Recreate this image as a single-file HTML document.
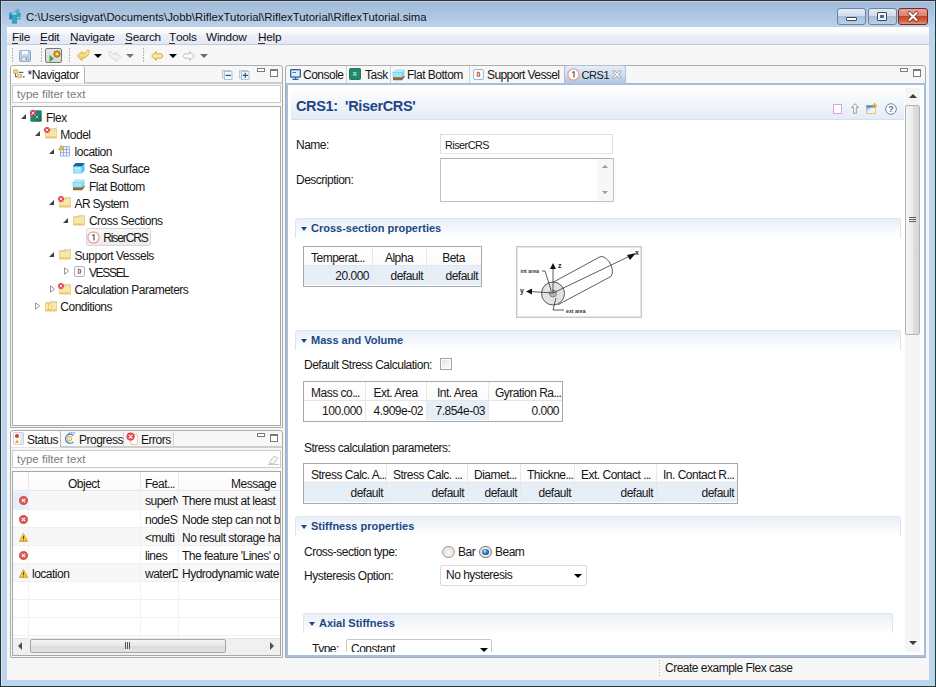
<!DOCTYPE html>
<html><head><meta charset="utf-8">
<style>
*{box-sizing:border-box;margin:0;padding:0}
html,body{width:936px;height:687px;overflow:hidden}
body{position:relative;font-family:"Liberation Sans",sans-serif;font-size:12px;letter-spacing:-0.5px;color:#161616;background:#b9d1ea}
.a{position:absolute}
.t{position:absolute;white-space:nowrap;line-height:13px;height:13px}
#frame{left:0;top:0;width:936px;height:687px;border:1px solid #2f3236;background:linear-gradient(#a2bcd9 0,#a6c0dd 8px,#b2cae5 18px,#bdd4ec 27px,#bcd4ec 60px,#bcd4ec)}
#frame2{left:1px;top:1px;width:934px;height:685px;border:1px solid rgba(255,255,255,0.35);border-bottom-color:#9ee4f7;border-right-color:#9ee4f7}
#title{left:26px;top:11px;font-size:11.4px;letter-spacing:0;color:#111}
.wbtn{top:8px;height:17px;border:1px solid #6f8199;border-radius:3px;background:linear-gradient(#e3ecf7 0,#cfdeef 45%,#a8c0dc 50%,#bad0e8 100%)}
#menubar{left:7px;top:27px;width:922px;height:18px;background:linear-gradient(#ffffff 0,#fcfcfe 30%,#eceff8 50%,#e4e8f5 100%);border-bottom:1px solid #c6cbdb}
.m{top:31px;font-size:11.8px;letter-spacing:-0.25px;color:#111}
.m u{text-decoration:none;position:relative}
.m u:after{content:"";position:absolute;left:0;right:1px;bottom:0px;height:1px;background:#333}
#toolbar{left:7px;top:45px;width:922px;height:21px;background:#f7f7f7}
#main{left:7px;top:66px;width:922px;height:614px;background:#f7f7f7}
.sep{position:absolute;width:1px;top:48px;height:15px;background:repeating-linear-gradient(#b5b5b5 0,#b5b5b5 2px,transparent 2px,transparent 3px)}
.dd{position:absolute;width:0;height:0;border-left:4px solid transparent;border-right:4px solid transparent;border-top:4px solid #000}
.pbox{position:absolute;border:1px solid #ababab;border-radius:3px 3px 0 0;background:#f7f7f7}
.tabsel{position:absolute;background:#fff;border-right:1px solid #b5b5b5}
.minb{position:absolute;width:8px;height:4px;border:1px solid #7a7a7a;background:#fff}
.maxb{position:absolute;width:8px;height:8px;border:1px solid #7a7a7a;border-top-width:2px;background:#fff}
.filter{position:absolute;border:1px solid #cbcbcb;background:#fff}
.gray{color:#7b7b7b;letter-spacing:0}
.tri{position:absolute;width:0;height:0;border-left:5px solid transparent;border-bottom:5px solid #404040}
.trc{position:absolute;width:0;height:0;border-top:4px solid transparent;border-bottom:4px solid transparent;border-left:4px solid #a0a0a0}
.trc:after{content:"";position:absolute;left:-3.5px;top:-2.5px;border-top:2.5px solid transparent;border-bottom:2.5px solid transparent;border-left:2.5px solid #fff}
.tl{position:absolute;white-space:nowrap;line-height:13px}
.vl{position:absolute;width:1px;background:#f0f0f0}
.hl{position:absolute;height:1px;background:#f0f0f0}
.sh{position:absolute;height:20px;border:1px solid #dde6f0;border-bottom:none;border-radius:3px 3px 0 0;background:linear-gradient(#e9eff7,#f6f9fc 60%,#ffffff)}
.shx{position:absolute;font-weight:bold;font-size:11px;letter-spacing:0;color:#1b4884;white-space:nowrap;line-height:13px}
.arr{position:absolute;width:0;height:0;border-left:3.5px solid transparent;border-right:3.5px solid transparent;border-top:4px solid #1b4884}
.tbl{position:absolute;border:1px solid #a7a7a7;background:#fff}
.th{position:absolute;white-space:nowrap;line-height:13px;overflow:hidden}
.cs{position:absolute;width:1px;background:#e5e5e5}
</style></head><body>
<div id="frame" class="a"></div><div id="frame2" class="a"></div>
<!-- title -->
<svg class="a" style="left:8px;top:8px" width="15" height="17" viewBox="0 0 15 17"><g fill="#3a9fc0"><rect x="7.5" y="1" width="4" height="3.6" rx="1"/><rect x="1" y="4.5" width="8" height="7" rx="0.6"/><rect x="3.8" y="11" width="5.2" height="4.8" rx="0.6"/><rect x="8.8" y="4.8" width="4" height="6.6" rx="0.6"/></g><rect x="8.2" y="1.6" width="2.6" height="1.2" fill="#7fd3ea"/><rect x="4" y="5" width="4.5" height="1.6" fill="#8fdaf0"/><rect x="9.5" y="9" width="3" height="1.2" fill="#8fdaf0"/><rect x="2" y="7" width="2" height="4" fill="#2b85a6"/></svg>
<div id="title" class="t">C:\Users\sigvat\Documents\Jobb\RiflexTutorial\RiflexTutorial\RiflexTutorial.sima</div>
<div class="a wbtn" style="left:837px;width:29px"></div>
<div class="a" style="left:846px;top:17px;width:11px;height:4px;background:#fff;border:1px solid #3c4a5c;border-radius:1px"></div>
<div class="a wbtn" style="left:868px;width:29px"></div>
<div class="a" style="left:877px;top:12px;width:10px;height:9px;background:#f4f4f4;border:1px solid #3c4a5c;border-radius:1px"></div>
<div class="a" style="left:880px;top:15px;width:4px;height:3px;background:#4a6a98"></div>
<div class="a wbtn" style="left:898px;width:30px;border-color:#6e2a2a;background:linear-gradient(#eba08f 0,#e0826d 45%,#c8442a 50%,#d7603f 80%,#e9957f 100%)"></div>
<svg class="a" style="left:906px;top:11px" width="14" height="11" viewBox="0 0 14 11"><path d="M3.5 2 L10.5 9 M10.5 2 L3.5 9" stroke="#5b2a22" stroke-width="3.6" stroke-linecap="round"/><path d="M3.5 2 L10.5 9 M10.5 2 L3.5 9" stroke="#fff" stroke-width="2.2" stroke-linecap="round"/></svg>

<!-- menu -->
<div id="menubar" class="a"></div>
<div class="t m" style="left:12px"><u>F</u>ile</div>
<div class="t m" style="left:40px"><u>E</u>dit</div>
<div class="t m" style="left:70px"><u>N</u>avigate</div>
<div class="t m" style="left:125px"><u>S</u>earch</div>
<div class="t m" style="left:169px"><u>T</u>ools</div>
<div class="t m" style="left:206px">Window</div>
<div class="t m" style="left:258px"><u>H</u>elp</div>

<!-- toolbar -->
<div id="toolbar" class="a"></div>
<div class="sep" style="left:12px"></div>
<div class="sep" style="left:41px"></div>
<div class="sep" style="left:69px"></div>
<div class="sep" style="left:143px"></div>
<!-- save -->
<svg class="a" style="left:19px;top:50px" width="12" height="12" viewBox="0 0 12 12"><rect x="0.5" y="0.5" width="11" height="11" rx="1.2" fill="#b9cde8" stroke="#8ea8cc"/><rect x="3" y="0.8" width="6" height="4.4" fill="#f6f8fb"/><path d="M3 4.6 H9" stroke="#d8c890" stroke-width="0.8"/><rect x="3" y="7.2" width="6" height="4" fill="#e4ebf5" stroke="#8aa3c6" stroke-width="0.6"/><rect x="6.5" y="8" width="1.5" height="2.4" fill="#7d98c0"/></svg>
<!-- pressed run button -->
<div class="a" style="left:45px;top:48px;width:17px;height:15px;border:1px solid #777;border-radius:2px;background:linear-gradient(#e4e4e4,#d8d8d8)"></div>
<svg class="a" style="left:49px;top:50px" width="12" height="12" viewBox="0 0 12 12"><path d="M0.5 5 L5 8.5 L0.5 12Z" fill="#3aa83a"/><circle cx="8" cy="4" r="3.2" fill="#d99c2b" stroke="#8a5a10" stroke-width="0.7"/><circle cx="8" cy="4" r="1.2" fill="#ffe28a"/></svg>
<!-- undo -->
<svg class="a" style="left:76px;top:49px" width="14" height="13" viewBox="0 0 14 13"><defs><linearGradient id="ug" x1="0" y1="0" x2="0" y2="1"><stop offset="0" stop-color="#fff0b0"/><stop offset="1" stop-color="#f0c850"/></linearGradient></defs><path d="M1.3 7 L6 2.3 L6 4.6 C8.3 4.6 10.6 3.2 11.6 0.8 L13.2 1.8 C13.2 6.2 10.2 9.2 6 9.3 L6 11.8 Z" fill="url(#ug)" stroke="#d7a32a" stroke-width="0.8" stroke-linejoin="round"/></svg>
<div class="dd" style="left:94px;top:54px"></div>
<svg class="a" style="left:107.5px;top:49.5px" width="14" height="13" viewBox="0 0 14 13"><path d="M12.7 7 L8 2.3 L8 4.6 C5.7 4.6 3.4 3.2 2.4 0.8 L0.8 1.8 C0.8 6.2 3.8 9.2 8 9.3 L8 11.8 Z" fill="#f3f3ee" stroke="#cfcfc6" stroke-width="0.8" stroke-linejoin="round"/></svg>
<div class="dd" style="left:126px;top:54px;border-top-color:#7a7a7a"></div>
<!-- back / forward -->
<svg class="a" style="left:151px;top:51px" width="12" height="10" viewBox="0 0 12 10"><path d="M0.6 5 L5.2 0.6 L5.2 2.9 L9.8 2.9 C11 2.9 11.4 3.8 11.4 5 C11.4 6.2 11 7.1 9.8 7.1 L5.2 7.1 L5.2 9.4 Z" fill="#fde9a6" stroke="#d39b1a" stroke-width="0.9" stroke-linejoin="round"/></svg>
<div class="dd" style="left:169px;top:54px"></div>
<svg class="a" style="left:182.5px;top:51px" width="12" height="10" viewBox="0 0 12 10"><path d="M11.4 5 L6.8 0.6 L6.8 2.9 L2.2 2.9 C1 2.9 0.6 3.8 0.6 5 C0.6 6.2 1 7.1 2.2 7.1 L6.8 7.1 L6.8 9.4 Z" fill="#fdfdfd" stroke="#a9a9a9" stroke-width="0.8" stroke-linejoin="round"/></svg>
<div class="dd" style="left:200px;top:54px;border-top-color:#6e6e6e"></div>

<!-- main -->
<div id="main" class="a"></div>

<!-- NAVIGATOR PANEL -->
<div class="pbox" style="left:10px;top:65px;width:273px;height:363px"></div>
<div class="tabsel" style="left:11px;top:66px;width:74px;height:17px;border-radius:3px 3px 0 0"></div>
<div class="a" style="left:85px;top:82px;width:197px;height:2px;background:#cdcdcd"></div><div class="a" style="left:11px;top:83px;width:74px;height:1px;background:#e2e2e2"></div>
<svg class="a" style="left:13px;top:69px" width="12" height="10" viewBox="0 0 12 10"><rect x="0.3" y="0.8" width="4.6" height="3.6" rx="1" fill="#f6d77a" stroke="#d09a3a" stroke-width="0.7"/><path d="M2.5 4.4 V7.6 H4.2" stroke="#3a7cc0" stroke-width="1.1" fill="none"/><path d="M5.8 3.4 H10.4" stroke="#2f6aad" stroke-width="1.1"/><rect x="4.2" y="5.4" width="4.8" height="3.4" rx="1" fill="#f6d77a" stroke="#d09a3a" stroke-width="0.7"/><rect x="10" y="7" width="1.6" height="1.6" fill="#4f8ccc"/></svg>
<div class="t" style="left:27.5px;top:69px;font-size:12.1px">*Navigator</div>
<svg class="a" style="left:222px;top:70px" width="11" height="10" viewBox="0 0 11 10"><rect x="0.5" y="0.5" width="8" height="7.5" fill="#e2f2fb" stroke="#b4c6da" stroke-width="0.9"/><rect x="2.5" y="1.5" width="7.5" height="8" fill="#f2fafe" stroke="#a9bcd3" stroke-width="0.9"/><path d="M3.6 5.4 H9" stroke="#2a5d8f" stroke-width="1.3"/></svg>
<svg class="a" style="left:239px;top:70px" width="11" height="10" viewBox="0 0 11 10"><rect x="0.5" y="0.5" width="8" height="7.5" fill="#e2f2fb" stroke="#b4c6da" stroke-width="0.9"/><rect x="2.5" y="1.5" width="7.5" height="8" fill="#f2fafe" stroke="#a9bcd3" stroke-width="0.9"/><path d="M3.6 5.4 H9 M6.3 2.7 V8.1" stroke="#2a5d8f" stroke-width="1.3"/></svg>
<div class="minb" style="left:257px;top:68px"></div>
<div class="maxb" style="left:270px;top:69px"></div>
<div class="filter" style="left:12px;top:85px;width:269px;height:18px"></div>
<div class="t gray" style="left:17px;top:88px;font-size:11.5px">type filter text</div>
<div class="a" style="left:12px;top:106px;width:269px;height:320px;border:1px solid #a3a8b0;background:#fff"></div>

<!-- TREE -->
<div class="a" style="left:86px;top:228px;width:65px;height:18px;background:linear-gradient(#f7f7f7,#ececec);border:1px solid #d9d9d9;border-radius:2px"></div>
<div class="tri" style="left:20.5px;top:114.1px"></div>
<svg class="a" style="left:29.5px;top:110.1px" width="12" height="12" viewBox="0 0 12 12"><defs><linearGradient id="fg" x1="0" y1="0" x2="1" y2="1"><stop offset="0" stop-color="#2a9c7e"/><stop offset="1" stop-color="#156a52"/></linearGradient></defs><rect x="0.3" y="0.3" width="11.4" height="11.4" rx="1.2" fill="url(#fg)"/><path d="M5.5 5.5 L8.5 8.5 M8.5 5.5 L5.5 8.5" stroke="#bfe6d8" stroke-width="0.7"/><circle cx="3" cy="3" r="3" fill="#e5434d"/><path d="M1.9 1.9 L4.1 4.1 M4.1 1.9 L1.9 4.1" stroke="#fff" stroke-width="0.9" stroke-linecap="round"/></svg>
<div class="tl" style="left:46.0px;top:111.6px">Flex</div>
<div class="tri" style="left:34.8px;top:131.3px"></div>
<svg class="a" style="left:43.8px;top:127.3px" width="13" height="12" viewBox="0 0 13 12"><g transform="translate(1,0.5)"><path d="M0.6 2.2 H4.6 L5.4 1.2 H11.4 V10.6 H0.6Z" fill="#f3d27a" stroke="#d9b45a" stroke-width="0.6"/><rect x="6.5" y="1.8" width="4.3" height="1.4" fill="#d6ecf5"/><rect x="0.8" y="3.4" width="10.4" height="7" fill="#f9e7a4"/><rect x="0.8" y="9" width="10.4" height="1.4" fill="#e8c466"/></g><circle cx="3" cy="3" r="3" fill="#e5434d"/><path d="M1.9 1.9 L4.1 4.1 M4.1 1.9 L1.9 4.1" stroke="#fff" stroke-width="0.9" stroke-linecap="round"/></svg>
<div class="tl" style="left:60.3px;top:128.8px">Model</div>
<div class="tri" style="left:49.1px;top:148.6px"></div>
<svg class="a" style="left:58.1px;top:144.6px" width="12" height="12" viewBox="0 0 12 12"><rect x="2.5" y="1.5" width="9" height="9.5" fill="#f4f8fd" stroke="#7ba3d6" stroke-width="0.8"/><path d="M5.5 1.5 V11 M8.5 1.5 V11 M2.5 4.5 H11.5 M2.5 7.7 H11.5" stroke="#7ba3d6" stroke-width="0.8"/><path d="M3 0.3 L5.7 5 H0.3Z" fill="#f3c21c" stroke="#c08a10" stroke-width="0.4"/></svg>
<div class="tl" style="left:74.6px;top:146.1px">location</div>
<svg class="a" style="left:72.4px;top:161.8px" width="13" height="12" viewBox="0 0 13 12"><path d="M1 4 L3.5 1 H12.5 L10 4Z" fill="#1f5fae"/><path d="M10 4 L12.5 1 V8.5 L10 11.5Z" fill="#4cc6ee"/><rect x="1" y="4" width="9" height="7.5" fill="#7fdcf6"/><rect x="2.5" y="5.5" width="6" height="2.2" fill="#c4f2fc"/><rect x="2.5" y="8.6" width="6" height="1.6" fill="#aeeafa"/><path d="M1 4 H10 L12.5 1" stroke="#1d4f9a" stroke-width="0.5" fill="none"/></svg>
<div class="tl" style="left:88.9px;top:163.3px">Sea Surface</div>
<svg class="a" style="left:72.4px;top:179.1px" width="13" height="12" viewBox="0 0 13 12"><path d="M1 3.5 L3.5 1 H12.5 L10 3.5Z" fill="#b8f0fc" stroke="#5fc8ee" stroke-width="0.5"/><path d="M10 3.5 L12.5 1 V7.5 L10 10Z" fill="#7fdcf6"/><rect x="1" y="3.5" width="9" height="5" fill="#9ee6f8" stroke="#5fc8ee" stroke-width="0.5"/><path d="M1 8.3 H10 L12.5 6.5 V8.2 L10 11.2 H1Z" fill="#8c6c38"/><path d="M1 8.3 H10 L12.5 6.5" stroke="#c7a565" stroke-width="0.6" fill="none"/></svg>
<div class="tl" style="left:88.9px;top:180.6px">Flat Bottom</div>
<div class="tri" style="left:49.1px;top:200.3px"></div>
<svg class="a" style="left:58.1px;top:196.3px" width="13" height="12" viewBox="0 0 13 12"><g transform="translate(1,0.5)"><path d="M0.6 2.2 H4.6 L5.4 1.2 H11.4 V10.6 H0.6Z" fill="#f3d27a" stroke="#d9b45a" stroke-width="0.6"/><rect x="6.5" y="1.8" width="4.3" height="1.4" fill="#d6ecf5"/><rect x="0.8" y="3.4" width="10.4" height="7" fill="#f9e7a4"/><rect x="0.8" y="9" width="10.4" height="1.4" fill="#e8c466"/></g><circle cx="3" cy="3" r="3" fill="#e5434d"/><path d="M1.9 1.9 L4.1 4.1 M4.1 1.9 L1.9 4.1" stroke="#fff" stroke-width="0.9" stroke-linecap="round"/></svg>
<div class="tl" style="left:74.6px;top:197.8px;letter-spacing:-0.7px">AR System</div>
<div class="tri" style="left:63.4px;top:217.6px"></div>
<svg class="a" style="left:72.4px;top:213.6px" width="13" height="12" viewBox="0 0 13 12"><g transform="translate(1,0.5)"><path d="M0.6 2.2 H4.6 L5.4 1.2 H11.4 V10.6 H0.6Z" fill="#f3d27a" stroke="#d9b45a" stroke-width="0.6"/><rect x="6.5" y="1.8" width="4.3" height="1.4" fill="#d6ecf5"/><rect x="0.8" y="3.4" width="10.4" height="7" fill="#f9e7a4"/><rect x="0.8" y="9" width="10.4" height="1.4" fill="#e8c466"/></g></svg>
<div class="tl" style="left:88.9px;top:215.1px">Cross Sections</div>
<svg class="a" style="left:86.7px;top:230.8px" width="13" height="13" viewBox="0 0 13 13"><circle cx="6.5" cy="6.5" r="5.6" fill="#fff" stroke="#f2a8a8" stroke-width="1.5"/><path d="M5.2 4.5 L7 3.5 V9.5" stroke="#333" stroke-width="1" fill="none"/></svg>
<div class="tl" style="left:103.2px;top:232.3px;letter-spacing:-1.1px">RiserCRS</div>
<div class="tri" style="left:49.1px;top:252.1px"></div>
<svg class="a" style="left:58.1px;top:248.1px" width="13" height="12" viewBox="0 0 13 12"><g transform="translate(1,0.5)"><path d="M0.6 2.2 H4.6 L5.4 1.2 H11.4 V10.6 H0.6Z" fill="#f3d27a" stroke="#d9b45a" stroke-width="0.6"/><rect x="6.5" y="1.8" width="4.3" height="1.4" fill="#d6ecf5"/><rect x="0.8" y="3.4" width="10.4" height="7" fill="#f9e7a4"/><rect x="0.8" y="9" width="10.4" height="1.4" fill="#e8c466"/></g></svg>
<div class="tl" style="left:74.6px;top:249.6px">Support Vessels</div>
<svg class="a" style="left:63.9px;top:267.4px" width="6" height="8" viewBox="0 0 6 8"><path d="M0.5 0.8 L4.6 4 L0.5 7.2Z" fill="#fff" stroke="#8a8a8a" stroke-width="0.9"/></svg>
<svg class="a" style="left:73.9px;top:265.9px" width="11" height="11" viewBox="0 0 11 11"><rect x="0.5" y="0.5" width="10" height="10" rx="1.5" fill="#fafcff" stroke="#8fb0d8" stroke-width="0.9"/><path d="M3.8 2.8 H5.8 Q7.3 2.8 7.3 5.3 Q7.3 7.8 5.8 7.8 H3.8Z" fill="#c0683a"/><rect x="4.8" y="4" width="1.2" height="2.6" fill="#f0d8c8"/></svg>
<div class="tl" style="left:88.9px;top:266.9px;letter-spacing:-1.3px">VESSEL</div>
<svg class="a" style="left:49.6px;top:284.6px" width="6" height="8" viewBox="0 0 6 8"><path d="M0.5 0.8 L4.6 4 L0.5 7.2Z" fill="#fff" stroke="#8a8a8a" stroke-width="0.9"/></svg>
<svg class="a" style="left:58.1px;top:282.6px" width="13" height="12" viewBox="0 0 13 12"><g transform="translate(1,0.5)"><path d="M0.6 2.2 H4.6 L5.4 1.2 H11.4 V10.6 H0.6Z" fill="#f3d27a" stroke="#d9b45a" stroke-width="0.6"/><rect x="6.5" y="1.8" width="4.3" height="1.4" fill="#d6ecf5"/><rect x="0.8" y="3.4" width="10.4" height="7" fill="#f9e7a4"/><rect x="0.8" y="9" width="10.4" height="1.4" fill="#e8c466"/></g><circle cx="3" cy="3" r="3" fill="#e5434d"/><path d="M1.9 1.9 L4.1 4.1 M4.1 1.9 L1.9 4.1" stroke="#fff" stroke-width="0.9" stroke-linecap="round"/></svg>
<div class="tl" style="left:74.6px;top:284.1px">Calculation Parameters</div>
<svg class="a" style="left:35.3px;top:301.9px" width="6" height="8" viewBox="0 0 6 8"><path d="M0.5 0.8 L4.6 4 L0.5 7.2Z" fill="#fff" stroke="#8a8a8a" stroke-width="0.9"/></svg>
<svg class="a" style="left:43.8px;top:299.9px" width="13" height="12" viewBox="0 0 13 12"><g transform="translate(1,0.5)"><path d="M0.6 2.2 H4.6 L5.4 1.2 H11.4 V10.6 H0.6Z" fill="#f3d27a" stroke="#d9b45a" stroke-width="0.6"/><rect x="6.5" y="1.8" width="4.3" height="1.4" fill="#d6ecf5"/><rect x="0.8" y="3.4" width="10.4" height="7" fill="#f9e7a4"/><rect x="0.8" y="9" width="10.4" height="1.4" fill="#e8c466"/></g><path d="M4.5 4.2 L8.5 7 L4.5 9.8Z" fill="#fffbe8" stroke="#e8b838" stroke-width="0.7"/></svg>
<div class="tl" style="left:60.3px;top:301.4px">Conditions</div>
<!-- STATUS PANEL -->
<div class="pbox" style="left:10px;top:430px;width:273px;height:228px"></div>
<div class="tabsel" style="left:11px;top:431px;width:50px;height:16px;border-radius:3px 3px 0 0"></div>
<div class="a" style="left:61px;top:446px;width:221px;height:2px;background:#cdcdcd"></div><div class="a" style="left:11px;top:447px;width:50px;height:1px;background:#e2e2e2"></div>
<div class="a" style="left:123px;top:432px;width:1px;height:14px;background:#d0d0d0"></div>
<div class="a" style="left:173px;top:432px;width:1px;height:14px;background:#d0d0d0"></div>
<svg class="a" style="left:13px;top:432px" width="11" height="13" viewBox="0 0 11 13"><rect x="0.5" y="0.5" width="10" height="12" rx="1" fill="#fafcfe" stroke="#b9c8da" stroke-width="0.8"/><rect x="7" y="1" width="3" height="11" fill="#dceaf6"/><circle cx="4" cy="4" r="2.1" fill="#e23a3a"/><path d="M4 7.6 L6.2 11 H1.8Z" fill="#f2b020"/></svg>
<div class="t" style="left:27px;top:434px">Status</div>
<svg class="a" style="left:64px;top:432px" width="12" height="12" viewBox="0 0 12 12"><path d="M9.5 3.6 A4.6 4.6 0 1 0 9.5 9.8" stroke="#3b7cc4" stroke-width="1.1" fill="none"/><circle cx="5.3" cy="6.6" r="2.4" fill="#fbe0c8" stroke="#e5b032" stroke-width="1"/><path d="M4.5 1 H6 M7 0.6 H8.5 M9.4 1 H11" stroke="#3b7cc4" stroke-width="0.9"/></svg>
<div class="t" style="left:79px;top:434px">Progress</div>
<svg class="a" style="left:126px;top:432px" width="13" height="13" viewBox="0 0 13 13"><path d="M4.5 2.5 H10 Q11.5 2.5 11.5 4 V11 Q11.5 12.5 10 12.5 H5 Z" fill="#fff" stroke="#d5c48a" stroke-width="0.8"/><circle cx="4.6" cy="4.6" r="4.1" fill="#e5434d"/><path d="M3.1 3.1 L6.1 6.1 M6.1 3.1 L3.1 6.1" stroke="#fff" stroke-width="1.1" stroke-linecap="round"/></svg>
<div class="t" style="left:141px;top:434px">Errors</div>
<div class="minb" style="left:257px;top:433px"></div>
<div class="maxb" style="left:270px;top:434px"></div>
<div class="filter" style="left:12px;top:450px;width:269px;height:18px"></div>
<div class="t gray" style="left:17px;top:453px;font-size:11.5px">type filter text</div>
<svg class="a" style="left:268px;top:454px" width="11" height="11" viewBox="0 0 11 11"><path d="M1 9 L6 2 L10 4 L6 10 Z" fill="#f5f5f5" stroke="#c8c8c8"/><path d="M0 10.5 H11" stroke="#c8c8c8"/></svg>
<div class="a" style="left:12px;top:471px;width:269px;height:185px;border:1px solid #a3a8b0;background:#fff"></div>

<!-- EDITOR -->
<div class="pbox" style="left:285px;top:65px;width:641px;height:593px;background:#f7f7f7"></div>
<div class="a" style="left:286px;top:83px;width:640px;height:574px;border:2px solid #a4bedd;background:#fff"></div>
<div class="a" style="left:346px;top:66px;width:1px;height:17px;background:#d2d2d2"></div>
<div class="a" style="left:390px;top:66px;width:1px;height:17px;background:#d2d2d2"></div>
<div class="a" style="left:469px;top:66px;width:1px;height:17px;background:#d2d2d2"></div>
<div class="a" style="left:564px;top:66px;width:1px;height:17px;background:#d2d2d2"></div>
<div class="a" style="left:564px;top:65px;width:62px;height:19px;border-radius:3px 3px 0 0;background:linear-gradient(#e6eef9,#d0dff1 45%,#b9cfe9 80%,#aac4e4);border:1px solid #b0c0d6;border-bottom:none"></div>
<svg class="a" style="left:290px;top:69px" width="11" height="11" viewBox="0 0 11 11"><rect x="0.6" y="0.6" width="9.8" height="7.6" rx="0.8" fill="#c9d8ee" stroke="#2a5fae" stroke-width="1.2"/><rect x="2" y="2" width="7" height="4.8" fill="#e8eef8"/><rect x="2.5" y="3" width="3.5" height="0.9" fill="#3a64a8"/><path d="M2.5 10.4 H8.5 M5.5 8.4 V10" stroke="#2a5fae" stroke-width="1.3"/></svg>
<div class="t" style="left:303px;top:69px;font-size:12px">Console</div>
<svg class="a" style="left:349px;top:68px" width="12" height="12" viewBox="0 0 12 12"><rect x="0.5" y="0.5" width="11" height="11" rx="1" fill="#1f8a6a" stroke="#146048" stroke-width="0.8"/><text x="4" y="8" font-size="5" fill="#fff" font-family="Liberation Sans">R</text></svg>
<div class="t" style="left:365px;top:69px;font-size:12px">Task</div>
<svg class="a" style="left:392px;top:68.5px" width="13" height="12" viewBox="0 0 13 12"><path d="M1 3.5 L3.5 1 H12.5 L10 3.5Z" fill="#b8f0fc" stroke="#5fc8ee" stroke-width="0.5"/><path d="M10 3.5 L12.5 1 V7.5 L10 10Z" fill="#7fdcf6"/><rect x="1" y="3.5" width="9" height="5" fill="#9ee6f8" stroke="#5fc8ee" stroke-width="0.5"/><path d="M1 8.3 H10 L12.5 6.5 V8.2 L10 11.2 H1Z" fill="#8c6c38"/></svg>
<div class="t" style="left:407px;top:69px;font-size:12px">Flat Bottom</div>
<svg class="a" style="left:472.5px;top:69px" width="11" height="11" viewBox="0 0 11 11"><rect x="0.5" y="0.5" width="10" height="10" rx="1.5" fill="#fafcff" stroke="#8fb0d8" stroke-width="0.9"/><path d="M3.8 2.8 H5.8 Q7.3 2.8 7.3 5.3 Q7.3 7.8 5.8 7.8 H3.8Z" fill="#c0683a"/><rect x="4.8" y="4" width="1.2" height="2.6" fill="#f0d8c8"/></svg>
<div class="t" style="left:487px;top:69px;font-size:12px;letter-spacing:-0.6px">Support Vessel</div>
<svg class="a" style="left:567px;top:68px" width="13" height="13" viewBox="0 0 13 13"><circle cx="6.5" cy="6.5" r="5.6" fill="#fff" stroke="#f0a0a0" stroke-width="1.4"/><path d="M5.2 4.5 L7 3.5 V9.5" stroke="#333" stroke-width="1" fill="none"/></svg>
<div class="t" style="left:581.5px;top:69px;font-size:11px;letter-spacing:-0.4px">CRS1</div>
<svg class="a" style="left:612px;top:70px" width="10" height="9" viewBox="0 0 10 9"><path d="M2 1.5 L8 7.5 M8 1.5 L2 7.5" stroke="#9a9a9a" stroke-width="2.8" stroke-linecap="round"/><path d="M2 1.5 L8 7.5 M8 1.5 L2 7.5" stroke="#fff" stroke-width="1.2" stroke-linecap="round"/></svg>
<div class="minb" style="left:900px;top:68px"></div>
<div class="maxb" style="left:913px;top:69px"></div>
<div class="a" style="left:291px;top:88px;width:613px;height:32px;background:linear-gradient(#ffffff,#f4f7fb 40%,#e4ecf6);border-bottom:1px solid #d5e0ee"></div>
<div class="t" style="left:296px;top:98px;font-size:14.5px;letter-spacing:-0.35px;font-weight:bold;color:#1d4683;height:17px;line-height:17px">CRS1:&nbsp; 'RiserCRS'</div>
<div class="a" style="left:833px;top:104px;width:9px;height:10px;border:1px solid #e0a0e0;background:#fff"></div>
<svg class="a" style="left:851px;top:103px" width="8" height="11" viewBox="0 0 8 11"><path d="M4 0.7 L7.3 4.5 H5.3 V10.3 H2.7 V4.5 H0.7Z" fill="#fff" stroke="#909090" stroke-width="0.9"/></svg>
<svg class="a" style="left:866px;top:103px" width="11" height="11" viewBox="0 0 11 11"><defs><linearGradient id="nf" x1="0" y1="0" x2="1" y2="1"><stop offset="0" stop-color="#3d7fd0"/><stop offset="0.45" stop-color="#e8f2fb"/><stop offset="1" stop-color="#fff6c8"/></linearGradient></defs><rect x="0.5" y="2.5" width="9" height="8" fill="url(#nf)" stroke="#d8c070" stroke-width="0.8"/><rect x="0.5" y="2.5" width="9" height="2" fill="#4a86d0"/><path d="M8.5 0 V5 M6 2.5 H11" stroke="#e0a820" stroke-width="1.4"/></svg>
<svg class="a" style="left:885px;top:103px" width="12" height="12" viewBox="0 0 12 12"><circle cx="6" cy="6" r="5.3" fill="#fff" stroke="#6f86a8" stroke-width="1"/><text x="3.3" y="9.3" font-size="9" font-weight="bold" fill="#5a6f90" font-family="Liberation Sans">?</text></svg>
<div class="a" style="left:905px;top:88px;width:15px;height:564px;background:#f5f5f5"></div>
<div class="a" style="left:909px;top:94px;width:0;height:0;border-left:4px solid transparent;border-right:4px solid transparent;border-bottom:4px solid #3c3c3c"></div>
<div class="a" style="left:905px;top:105px;width:15px;height:230px;border:1px solid #b4b4b4;border-radius:2px;background:linear-gradient(90deg,#f6f6f6,#ececec 50%,#e0e0e0 51%,#d4d4d4)"></div>
<div class="a" style="left:909px;top:217px;width:7px;height:1px;background:#606060;box-shadow:0 2px 0 #606060,0 4px 0 #606060"></div>
<div class="a" style="left:909px;top:641px;width:0;height:0;border-left:4px solid transparent;border-right:4px solid transparent;border-top:4px solid #3c3c3c"></div>
<div class="t" style="left:296px;top:139px">Name:</div>
<div class="a" style="left:440px;top:134px;width:173px;height:20px;border:1px solid #dcdfe6;border-bottom-color:#e3e9ef;background:#fff"></div>
<div class="t" style="left:445px;top:139px;font-size:10.8px">RiserCRS</div>
<div class="t" style="left:296px;top:174px">Description:</div>
<div class="a" style="left:440px;top:158px;width:174px;height:44px;border:1px solid #c2c2c2;border-top-color:#b0b0b0;background:#fff"></div>
<div class="a" style="left:597px;top:159px;width:16px;height:42px;background:#f7f7f7"></div>
<div class="a" style="left:602px;top:165px;width:0;height:0;border-left:3px solid transparent;border-right:3px solid transparent;border-bottom:3px solid #9a9a9a"></div>
<div class="a" style="left:602px;top:191px;width:0;height:0;border-left:3px solid transparent;border-right:3px solid transparent;border-top:3px solid #9a9a9a"></div>
<div class="sh" style="left:295px;top:218px;width:606px"></div>
<div class="arr" style="left:300.5px;top:226.5px"></div>
<div class="shx" style="left:311px;top:222px">Cross-section properties</div>
<div class="sh" style="left:295px;top:330px;width:606px"></div>
<div class="arr" style="left:300.5px;top:338.5px"></div>
<div class="shx" style="left:311px;top:334px">Mass and Volume</div>
<div class="sh" style="left:295px;top:516px;width:606px"></div>
<div class="arr" style="left:300.5px;top:524.5px"></div>
<div class="shx" style="left:311px;top:520px">Stiffness properties</div>
<div class="sh" style="left:303px;top:613px;width:590px"></div>
<div class="arr" style="left:308.5px;top:621.5px"></div>
<div class="shx" style="left:319px;top:617px">Axial Stiffness</div>
<div class="tbl" style="left:303px;top:246px;width:179px;height:41px"></div>
<div class="a" style="left:304px;top:247px;width:177px;height:19px;background:linear-gradient(#ffffff,#fbfbfc);border-bottom:1px solid #e5e5e5"></div>
<div class="a" style="left:304px;top:266px;width:68px;height:19px;background:#e6eef8"></div>
<div class="a" style="left:372px;top:266px;width:54px;height:19px;background:#e6eef8"></div>
<div class="a" style="left:426px;top:266px;width:55px;height:19px;background:#e6eef8"></div>
<div class="a" style="left:372px;top:247px;width:1px;height:38px;background:#e8e8e8"></div>
<div class="a" style="left:426px;top:247px;width:1px;height:38px;background:#e8e8e8"></div>
<div class="th" style="left:304px;top:252px;width:68px;text-align:left;padding:0 3px 0 7px">Temperat<span style="letter-spacing:-0.9px">...</span></div>
<div class="th" style="left:304px;top:270px;width:68px;text-align:right;padding:0 3px">20.000</div>
<div class="th" style="left:372px;top:252px;width:54px;text-align:center;padding:0 0px 0 0px">Alpha</div>
<div class="th" style="left:372px;top:270px;width:54px;text-align:right;padding:0 3px">default</div>
<div class="th" style="left:426px;top:252px;width:55px;text-align:center;padding:0 0px 0 0px">Beta</div>
<div class="th" style="left:426px;top:270px;width:55px;text-align:right;padding:0 3px">default</div>
<div class="tbl" style="left:303px;top:381px;width:260px;height:41px"></div>
<div class="a" style="left:304px;top:382px;width:258px;height:19px;background:linear-gradient(#ffffff,#fbfbfc);border-bottom:1px solid #e5e5e5"></div>
<div class="a" style="left:426px;top:401px;width:62px;height:19px;background:#e6eef8"></div>
<div class="a" style="left:365px;top:382px;width:1px;height:38px;background:#e8e8e8"></div>
<div class="a" style="left:426px;top:382px;width:1px;height:38px;background:#e8e8e8"></div>
<div class="a" style="left:488px;top:382px;width:1px;height:38px;background:#e8e8e8"></div>
<div class="th" style="left:304px;top:387px;width:61px;text-align:left;padding:0 3px 0 7px">Mass co<span style="letter-spacing:-0.9px">...</span></div>
<div class="th" style="left:304px;top:405px;width:61px;text-align:right;padding:0 3px">100.000</div>
<div class="th" style="left:365px;top:387px;width:61px;text-align:center;padding:0 0px 0 0px">Ext. Area</div>
<div class="th" style="left:365px;top:405px;width:61px;text-align:right;padding:0 3px">4.909e-02</div>
<div class="th" style="left:426px;top:387px;width:62px;text-align:center;padding:0 0px 0 0px">Int. Area</div>
<div class="th" style="left:426px;top:405px;width:62px;text-align:right;padding:0 3px">7.854e-03</div>
<div class="th" style="left:488px;top:387px;width:74px;text-align:left;padding:0 3px 0 7px">Gyration Ra<span style="letter-spacing:-0.9px">...</span></div>
<div class="th" style="left:488px;top:405px;width:74px;text-align:right;padding:0 3px">0.000</div>
<div class="tbl" style="left:303px;top:463px;width:435px;height:41px"></div>
<div class="a" style="left:304px;top:464px;width:433px;height:19px;background:linear-gradient(#ffffff,#fbfbfc);border-bottom:1px solid #e5e5e5"></div>
<div class="a" style="left:304px;top:483px;width:433px;height:19px;background:#e6eef8"></div>
<div class="a" style="left:386px;top:464px;width:1px;height:38px;background:#e8e8e8"></div>
<div class="a" style="left:467px;top:464px;width:1px;height:38px;background:#e8e8e8"></div>
<div class="a" style="left:520px;top:464px;width:1px;height:38px;background:#e8e8e8"></div>
<div class="a" style="left:574px;top:464px;width:1px;height:38px;background:#e8e8e8"></div>
<div class="a" style="left:656px;top:464px;width:1px;height:38px;background:#e8e8e8"></div>
<div class="th" style="left:304px;top:469px;width:82px;text-align:left;padding:0 3px 0 7px">Stress Calc. A<span style="letter-spacing:-0.9px">...</span></div>
<div class="th" style="left:304px;top:487px;width:82px;text-align:right;padding:0 3px">default</div>
<div class="th" style="left:386px;top:469px;width:81px;text-align:left;padding:0 3px 0 7px">Stress Calc. <span style="letter-spacing:-0.9px">...</span></div>
<div class="th" style="left:386px;top:487px;width:81px;text-align:right;padding:0 3px">default</div>
<div class="th" style="left:467px;top:469px;width:53px;text-align:left;padding:0 3px 0 7px">Diamet<span style="letter-spacing:-0.9px">...</span></div>
<div class="th" style="left:467px;top:487px;width:53px;text-align:right;padding:0 3px">default</div>
<div class="th" style="left:520px;top:469px;width:54px;text-align:left;padding:0 3px 0 7px">Thickne<span style="letter-spacing:-0.9px">...</span></div>
<div class="th" style="left:520px;top:487px;width:54px;text-align:right;padding:0 3px">default</div>
<div class="th" style="left:574px;top:469px;width:82px;text-align:left;padding:0 3px 0 7px">Ext. Contact <span style="letter-spacing:-0.9px">...</span></div>
<div class="th" style="left:574px;top:487px;width:82px;text-align:right;padding:0 3px">default</div>
<div class="th" style="left:656px;top:469px;width:81px;text-align:left;padding:0 3px 0 7px">In. Contact R<span style="letter-spacing:-0.9px">...</span></div>
<div class="th" style="left:656px;top:487px;width:81px;text-align:right;padding:0 3px">default</div>
<div class="a" style="left:516px;top:246px;width:126px;height:72px;border:1px solid #c8c8c8;background:#fff"></div>
<div class="a" style="left:517px;top:247px;width:124px;height:70px;border:1px solid #dbe8f5"></div>
<svg class="a" style="left:516px;top:246px" width="126" height="72" viewBox="0 0 126 72">
<g stroke="#333" fill="none" stroke-width="0.8">
<path d="M37 36.3 L84.4 10.6 A6.5 11.3 -27 0 1 93 31.5 L42 58.7"/>
<circle cx="37" cy="47.5" r="11.5" fill="#e2e2e2"/>
<circle cx="37" cy="47.5" r="3.5" fill="#b5b5b5" stroke="#777"/>
<path d="M37 47 L116 9"/>
<path d="M37 47 L37 20"/>
<path d="M37 47 L14 45.5"/>
<path d="M26 25 H29 L35 44"/>
<path d="M40 52 L37 64 H48"/>
</g>
<path d="M120 7 L111 9 L114 14Z" fill="#111"/>
<path d="M37 17 L34 23 H40Z" fill="#111"/>
<path d="M10 45.5 L16 42.5 V48.5Z" fill="#111"/>
<text x="119" y="9" font-size="7" letter-spacing="0" font-family="Liberation Sans" font-weight="bold" fill="#222">x</text>
<text x="42" y="22" font-size="7" letter-spacing="0" font-family="Liberation Sans" font-weight="bold" fill="#222">z</text>
<text x="4" y="47" font-size="7" letter-spacing="0" font-family="Liberation Sans" font-weight="bold" fill="#222">y</text>
<text x="4.5" y="27" font-size="5.2" letter-spacing="0" font-family="Liberation Sans" font-weight="bold" fill="#333">int area</text>
<text x="50" y="66.5" font-size="5.2" letter-spacing="0" font-family="Liberation Sans" font-weight="bold" fill="#333">ext area</text>
</svg>
<div class="t" style="left:304px;top:359px">Default Stress Calculation:</div>
<div class="a" style="left:440px;top:358px;width:12px;height:12px;border:1px solid #a3a3a3;box-shadow:inset 0 0 0 1px #fbfbfb;background:linear-gradient(135deg,#dde2ea,#f4f5f7 70%,#fbfbfb)"></div>
<div class="t" style="left:304px;top:442px">Stress calculation parameters:</div>
<div class="t" style="left:304px;top:546px">Cross-section type:</div>
<div class="a" style="left:442px;top:545.5px;width:12.5px;height:12.5px;border-radius:50%;border:1px solid #a0a0a0;background:radial-gradient(circle at 50% 60%,#f8f8f8,#e2e2e2 70%,#d0d0d0)"></div>
<div class="t" style="left:458px;top:546px">Bar</div>
<div class="a" style="left:479px;top:545.5px;width:12.5px;height:12.5px;border-radius:50%;border:1px solid #7a7a7a;background:radial-gradient(#fafafa,#dcdcdc)"></div>
<div class="a" style="left:482px;top:548.5px;width:6.5px;height:6.5px;border-radius:50%;background:radial-gradient(circle at 40% 35%,#b8e6fb,#2a78c0 45%,#0f3f7a 90%)"></div>
<div class="t" style="left:495px;top:546px">Beam</div>
<div class="t" style="left:304px;top:570px">Hysteresis Option:</div>
<div class="a" style="left:440px;top:565px;width:147px;height:21px;border:1px solid #dcdcdc;border-radius:2px;background:#fff"></div>
<div class="t" style="left:446px;top:569px">No hysteresis</div>
<div class="a" style="left:574px;top:574px;width:0;height:0;border-left:4px solid transparent;border-right:4px solid transparent;border-top:4px solid #000"></div>
<div class="a" style="left:288px;top:636px;width:617px;height:16px;overflow:hidden"><div class="t" style="left:24px;top:7px">Type:</div><div class="a" style="left:58px;top:3px;width:146px;height:21px;border:1px solid #c8c8c8;border-radius:2px;background:#fff"></div><div class="t" style="left:63px;top:7px">Constant</div><div class="a" style="left:192px;top:12px;width:0;height:0;border-left:4px solid transparent;border-right:4px solid transparent;border-top:4px solid #000"></div></div>
<div class="a" style="left:659px;top:660px;width:1px;height:18px;background:repeating-linear-gradient(#b0b0b0 0,#b0b0b0 1px,transparent 1px,transparent 3px)"></div>
<div class="t" style="left:665px;top:662px">Create example Flex case</div>
<!-- STATUS TABLE -->
<div class="a" style="left:13px;top:472px;width:267px;height:19px;background:linear-gradient(#fff,#fafafa);border-bottom:1px solid #e6e6e6"></div>
<div class="a" style="left:28px;top:472px;width:1px;height:19px;background:#e8e8e8"></div>
<div class="a" style="left:140px;top:472px;width:1px;height:19px;background:#e8e8e8"></div>
<div class="a" style="left:178px;top:472px;width:1px;height:19px;background:#e8e8e8"></div>
<div class="tl" style="left:68px;top:477.5px;font-size:12px">Object</div>
<div class="tl" style="left:145px;top:477.5px;font-size:12px">Feat<span style="letter-spacing:-0.9px">...</span></div>
<div class="tl" style="left:231px;top:477.5px;font-size:12px">Message</div>
<div class="a" style="left:13px;top:491px;width:267px;height:19px;background:#f7f7f7"></div>
<div class="a" style="left:13px;top:509px;width:267px;height:1px;background:#f0f0f0"></div>
<div class="a" style="left:13px;top:527px;width:267px;height:1px;background:#f0f0f0"></div>
<div class="a" style="left:13px;top:528px;width:267px;height:18px;background:#f7f7f7"></div>
<div class="a" style="left:13px;top:545px;width:267px;height:1px;background:#f0f0f0"></div>
<div class="a" style="left:13px;top:563px;width:267px;height:1px;background:#f0f0f0"></div>
<div class="a" style="left:13px;top:564px;width:267px;height:18px;background:#f7f7f7"></div>
<div class="a" style="left:13px;top:581px;width:267px;height:1px;background:#f0f0f0"></div>
<div class="a" style="left:13px;top:599px;width:267px;height:1px;background:#f0f0f0"></div>
<div class="a" style="left:13px;top:617px;width:267px;height:1px;background:#f0f0f0"></div>
<div class="a" style="left:13px;top:635px;width:267px;height:1px;background:#f0f0f0"></div>
<div class="a" style="left:28px;top:491px;width:1px;height:147px;background:#f2f2f2"></div>
<div class="a" style="left:140px;top:491px;width:1px;height:147px;background:#f2f2f2"></div>
<div class="a" style="left:178px;top:491px;width:1px;height:147px;background:#f2f2f2"></div>
<div class="a" style="left:13px;top:492px;width:15px;height:17px;background:#e6eef9"></div>
<svg class="a" style="left:18.5px;top:496px" width="9" height="9" viewBox="0 0 9 9"><circle cx="4.5" cy="4.5" r="4.2" fill="#e25050" stroke="#c03030" stroke-width="0.5"/><path d="M2.8 2.8 L6.2 6.2 M6.2 2.8 L2.8 6.2" stroke="#fff" stroke-width="1.1"/></svg>
<div class="a" style="left:145px;top:495px;width:33px;overflow:hidden;white-space:nowrap;line-height:13px;font-size:12px">superN</div>
<div class="a" style="left:182px;top:495px;width:98px;overflow:hidden;white-space:nowrap;line-height:13px;font-size:12px">There must at least</div>
<svg class="a" style="left:18.5px;top:514.5px" width="9" height="9" viewBox="0 0 9 9"><circle cx="4.5" cy="4.5" r="4.2" fill="#e25050" stroke="#c03030" stroke-width="0.5"/><path d="M2.8 2.8 L6.2 6.2 M6.2 2.8 L2.8 6.2" stroke="#fff" stroke-width="1.1"/></svg>
<div class="a" style="left:145px;top:513.5px;width:33px;overflow:hidden;white-space:nowrap;line-height:13px;font-size:12px">nodeSt</div>
<div class="a" style="left:182px;top:513.5px;width:98px;overflow:hidden;white-space:nowrap;line-height:13px;font-size:12px">Node step can not b</div>
<svg class="a" style="left:18.5px;top:532.5px" width="9" height="9" viewBox="0 0 9 9"><path d="M4.5 0.6 L8.6 8.4 H0.4Z" fill="#f5c932" stroke="#c08a10" stroke-width="0.7"/><path d="M4.5 3.2 V5.8" stroke="#5a3a00" stroke-width="1"/><circle cx="4.5" cy="7" r="0.5" fill="#5a3a00"/></svg>
<div class="a" style="left:145px;top:531.5px;width:33px;overflow:hidden;white-space:nowrap;line-height:13px;font-size:12px">&lt;multi</div>
<div class="a" style="left:182px;top:531.5px;width:98px;overflow:hidden;white-space:nowrap;line-height:13px;font-size:12px">No result storage ha</div>
<svg class="a" style="left:18.5px;top:550.5px" width="9" height="9" viewBox="0 0 9 9"><circle cx="4.5" cy="4.5" r="4.2" fill="#e25050" stroke="#c03030" stroke-width="0.5"/><path d="M2.8 2.8 L6.2 6.2 M6.2 2.8 L2.8 6.2" stroke="#fff" stroke-width="1.1"/></svg>
<div class="a" style="left:145px;top:549.5px;width:33px;overflow:hidden;white-space:nowrap;line-height:13px;font-size:12px">lines</div>
<div class="a" style="left:182px;top:549.5px;width:98px;overflow:hidden;white-space:nowrap;line-height:13px;font-size:12px">The feature 'Lines' o</div>
<svg class="a" style="left:18.5px;top:568.5px" width="9" height="9" viewBox="0 0 9 9"><path d="M4.5 0.6 L8.6 8.4 H0.4Z" fill="#f5c932" stroke="#c08a10" stroke-width="0.7"/><path d="M4.5 3.2 V5.8" stroke="#5a3a00" stroke-width="1"/><circle cx="4.5" cy="7" r="0.5" fill="#5a3a00"/></svg>
<div class="tl" style="left:32px;top:567.5px;font-size:12px">location</div>
<div class="a" style="left:145px;top:567.5px;width:33px;overflow:hidden;white-space:nowrap;line-height:13px;font-size:12px">waterD</div>
<div class="a" style="left:182px;top:567.5px;width:98px;overflow:hidden;white-space:nowrap;line-height:13px;font-size:12px">Hydrodynamic wate</div>
<div class="a" style="left:13px;top:638px;width:267px;height:17px;background:#f0f0f0;border-top:1px solid #e8e8e8"></div>
<div class="a" style="left:30px;top:639px;width:196px;height:14px;border:1px solid #a8a8a8;border-radius:2px;background:linear-gradient(#f4f4f4,#e8e8e8 50%,#dcdcdc 51%,#e2e2e2)"></div>
<div class="a" style="left:125px;top:642px;width:1px;height:7px;background:#555;box-shadow:2px 0 0 #555,4px 0 0 #555"></div>
<div class="a" style="left:18px;top:642px;width:0;height:0;border-top:4px solid transparent;border-bottom:4px solid transparent;border-right:4px solid #505050"></div>
<div class="a" style="left:270px;top:642px;width:0;height:0;border-top:4px solid transparent;border-bottom:4px solid transparent;border-left:4px solid #505050"></div>
</body></html>
